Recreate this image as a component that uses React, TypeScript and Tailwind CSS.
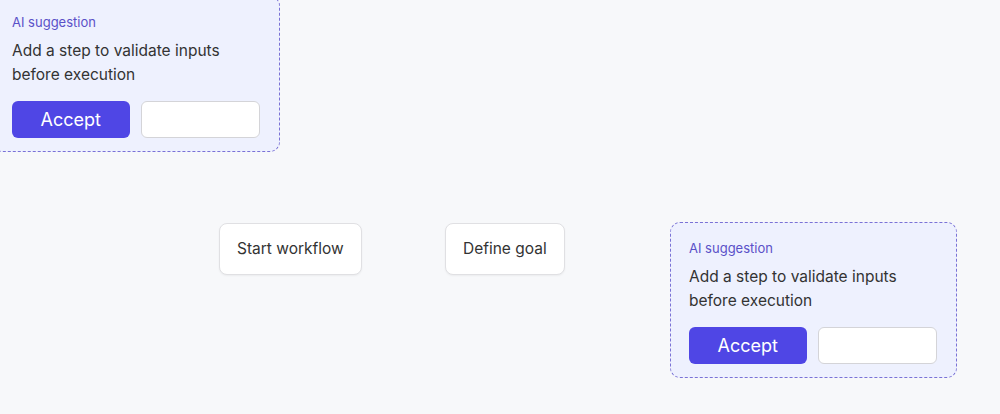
import React from "react";

function Suggestion({ className }: { className: string }) {
  return (
    <div
      className={`absolute w-[287px] rounded-[10px] border border-dashed border-[#7a72d6] bg-[#eef1fe] pl-[18px] pr-[19px] pt-[16px] pb-[13px] ${className}`}
    >
      <div className="text-[13px] leading-[18px] text-[#5a50c8]">AI suggestion</div>
      <div className="mt-[8px] text-[15.5px] leading-[24px] text-[#333]">
        Add a step to validate inputs
        <br />
        before execution
      </div>
      <div className="mt-[14px] flex gap-[11px]">
        <button className="h-[37px] w-[118px] rounded-[6px] bg-[#4f46e5] text-[18px] text-white">
          Accept
        </button>
        <button className="h-[37px] w-[120px] rounded-[6px] border border-[#d4d4d8] bg-white"></button>
      </div>
    </div>
  );
}

function Node({ label, className }: { label: string; className: string }) {
  return (
    <div
      className={`absolute flex h-[52px] items-center rounded-[8px] border border-[#e0e0e3] bg-white px-[17px] text-[15.5px] text-[#333] shadow-[0_1px_2px_rgba(0,0,0,0.05)] ${className}`}
    >
      {label}
    </div>
  );
}

export default function App() {
  return (
    <div
      className="relative h-[414px] w-[1000px] overflow-hidden bg-[#f7f8fa]"
      style={{ fontFamily: "Inter, 'Noto Sans', sans-serif" }}
    >
      <Suggestion className="left-[-7px] top-[-4px]" />
      <Node label="Start workflow" className="left-[219px] top-[223px]" />
      <Node label="Define goal" className="left-[445px] top-[223px]" />
      <Suggestion className="left-[670px] top-[222px]" />
    </div>
  );
}
